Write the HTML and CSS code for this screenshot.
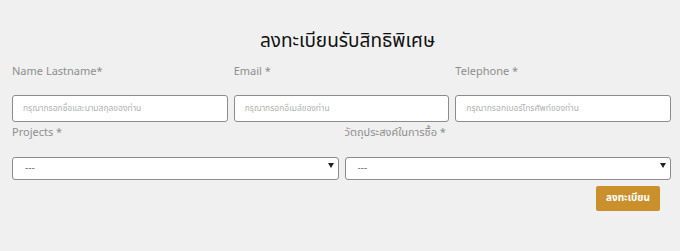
FILE: index.html
```html
<!DOCTYPE html>
<html lang="th">
<head>
  <meta charset="UTF-8" />
  <meta name="viewport" content="width=device-width, initial-scale=1.0"/>
  <title>ลงทะเบียนรับสิทธิพิเศษ</title>
  <link rel="stylesheet" href="styles.css">
</head>
<body>

  <div class="register-container">
    <h2>ลงทะเบียนรับสิทธิพิเศษ</h2>

    <form id="registerForm">
      <div class="form-row row-3">
        <div class="form-group">
          <label for="name">Name Lastname*</label>
          <input type="text" id="name" name="name" placeholder="กรุณากรอกชื่อและนามสกุลของท่าน">
        </div>
        <div class="form-group">
          <label for="email">Email *</label>
          <input type="text" id="email" name="email" placeholder="กรุณากรอกอีเมล์ของท่าน">
        </div>
        <div class="form-group">
          <label for="tel">Telephone *</label>
          <input type="text" id="tel" name="tel" placeholder="กรุณากรอกเบอร์โทรศัพท์ของท่าน">
        </div>
      </div>

      <div class="form-row row-2">
        <div class="form-group">
          <label for="project">Projects *</label>
          <div class="select-wrap">
            <select id="project" name="project">
              <option value="" selected>---</option>
            </select>
          </div>
        </div>
        <div class="form-group">
          <label for="purpose">วัตถุประสงค์ในการซื้อ *</label>
          <div class="select-wrap">
            <select id="purpose" name="purpose">
              <option value="" selected>---</option>
            </select>
          </div>
        </div>
      </div>

      <div class="form-actions">
        <button type="submit" class="form-submit">ลงทะเบียน</button>
      </div>
    </form>
  </div>

</body>
</html>
```

FILE: styles.css
```css
:root {
  --bg: #f0f0f0;
  --label: #8e8e8e;
  --border: #8c8c8c;
  --gold: #c9902c;
}

* {
  box-sizing: border-box;
  margin: 0;
  padding: 0;
}

body {
  font-family: "Noto Sans Thai", "Noto Sans", "Open Sans", sans-serif;
  background-color: var(--bg);
  color: #222;
}

.register-container {
  padding: 28px 9px 0 12px;
}

h2 {
  text-align: center;
  font-size: 19px;
  font-weight: 400;
  color: #111;
  line-height: 28px;
  margin-bottom: 8px;
  padding-left: 12px;
}

.form-row {
  display: grid;
  gap: 6px;
}

.row-3 {
  grid-template-columns: repeat(3, 1fr);
}

.row-2 {
  grid-template-columns: repeat(2, 1fr);
}

.form-group {
  display: flex;
  flex-direction: column;
}

.form-group label {
  font-size: 11px;
  color: var(--label);
  line-height: 16px;
}

.row-3 label {
  margin-bottom: 15px;
}

.row-2 label {
  margin-top: 3px;
  margin-bottom: 13px;
}

.form-group input {
  height: 27px;
  padding: 0 10px;
  border: 1px solid var(--border);
  border-radius: 3px;
  background: #fff;
  font-family: inherit;
  font-size: 8.5px;
}

.form-group input::placeholder {
  color: #b0b0b0;
}

.select-wrap {
  position: relative;
}

.select-wrap::after {
  content: "";
  position: absolute;
  right: 5px;
  top: 9px;
  border-left: 3px solid transparent;
  border-right: 3px solid transparent;
  border-top: 5px solid #222;
  pointer-events: none;
}

.form-group select {
  width: 100%;
  height: 23px;
  padding: 0 12px;
  border: 1px solid var(--border);
  border-radius: 3px;
  background: #fff;
  font-family: inherit;
  font-size: 10px;
  color: #777;
  appearance: none;
  -webkit-appearance: none;
}

.form-actions {
  display: flex;
  justify-content: flex-end;
  padding: 6px 11px 0 0;
}

.form-submit {
  width: 64px;
  height: 25px;
  background-color: var(--gold);
  color: #fff;
  border: none;
  border-radius: 2px;
  font-family: inherit;
  font-size: 10px;
  font-weight: 700;
}
```
